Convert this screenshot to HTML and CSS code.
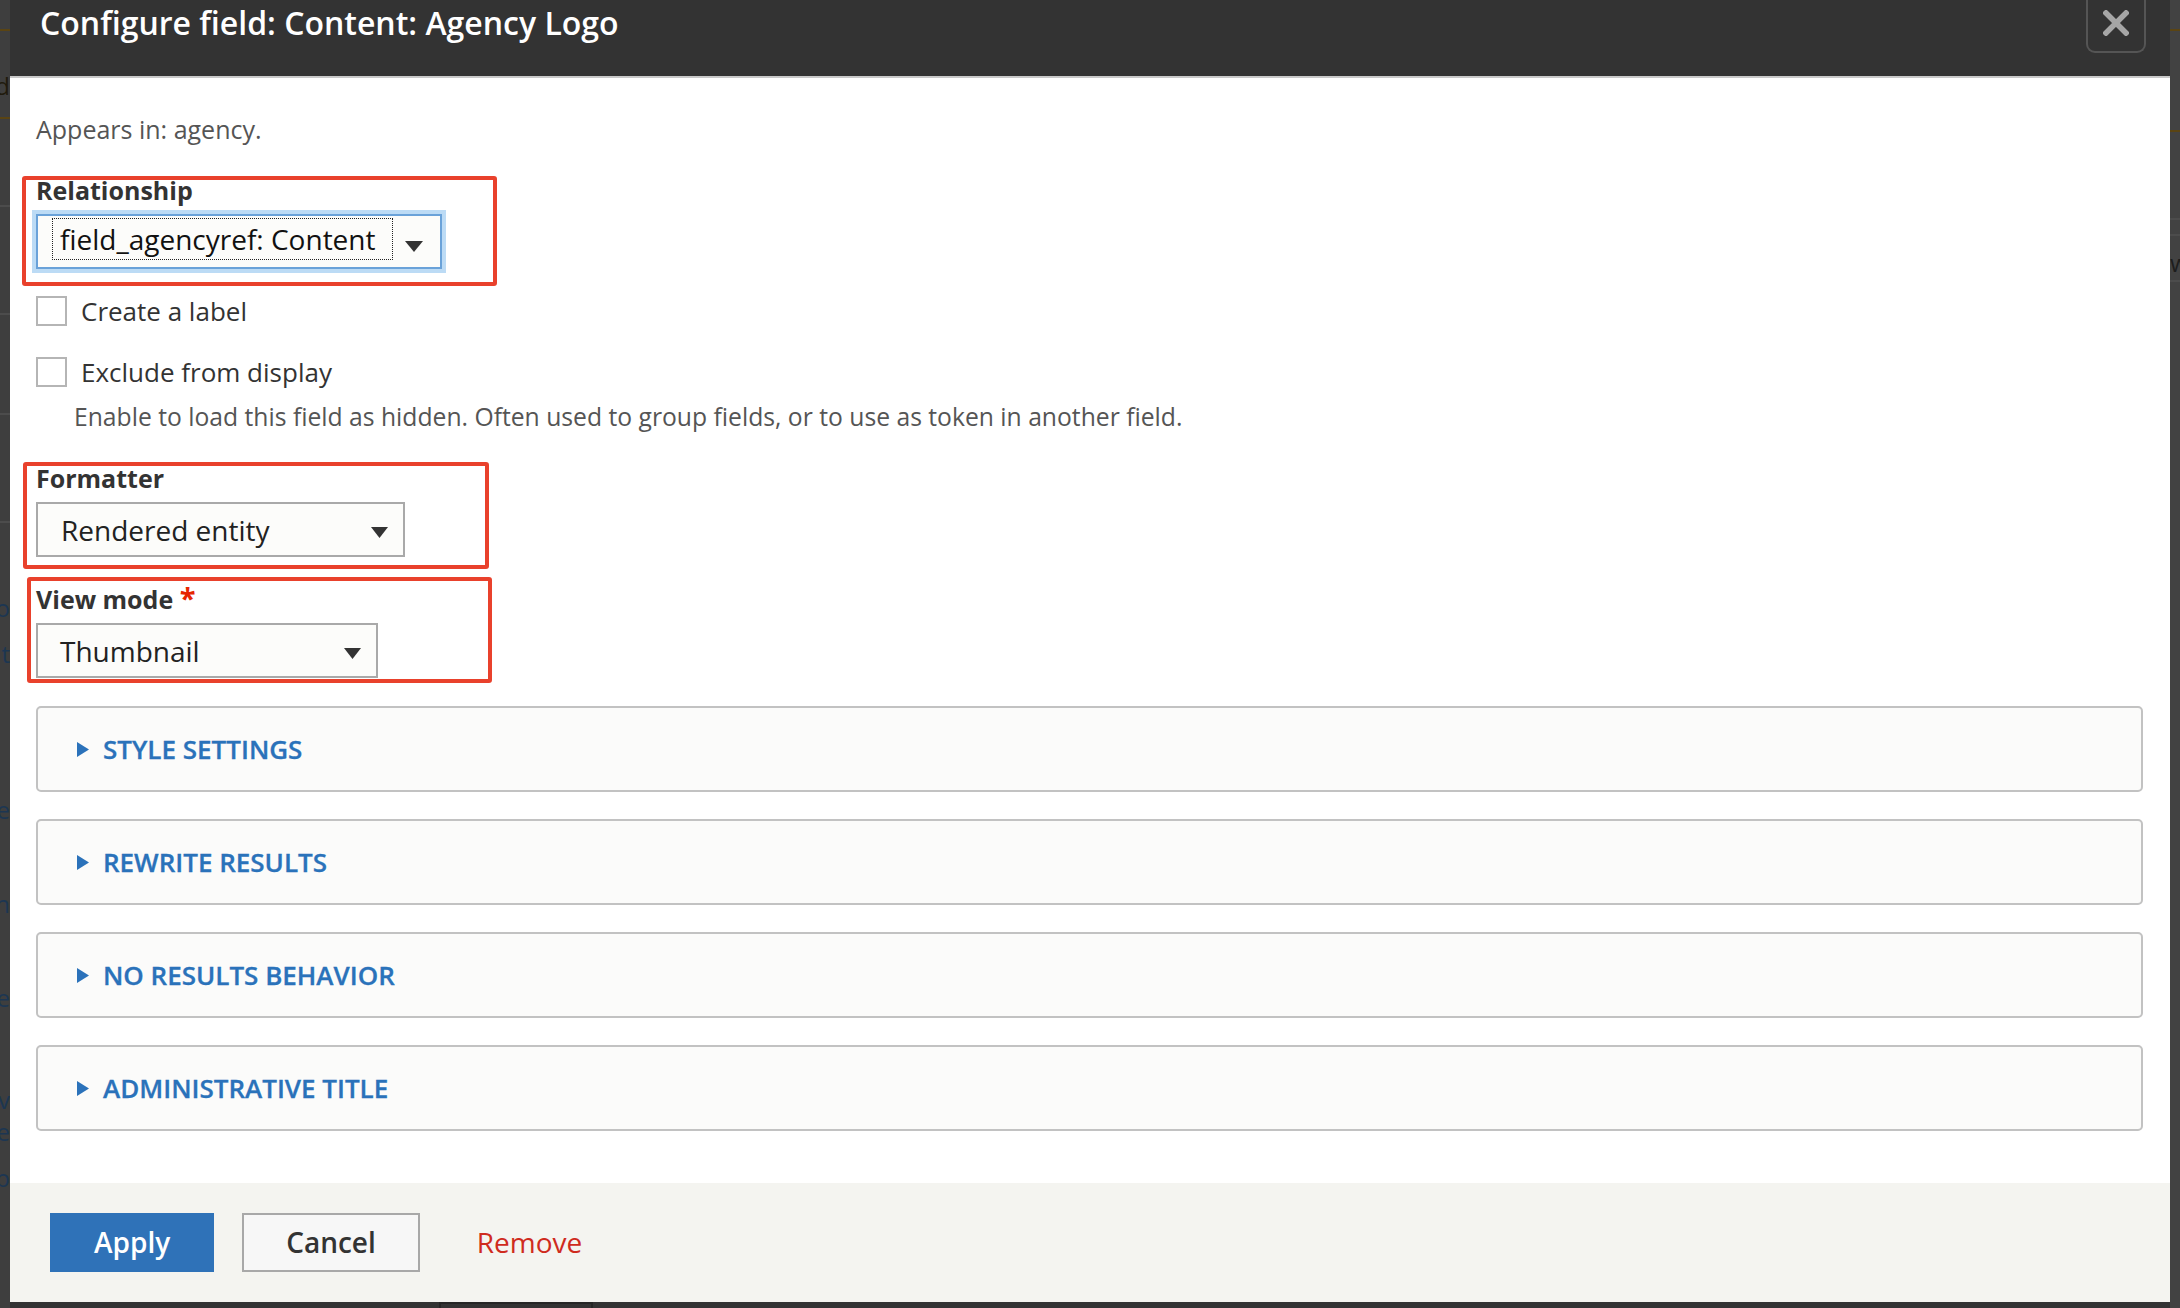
FILE: index.html
```html
<!DOCTYPE html>
<html lang="en">
<head>
<meta charset="utf-8">
<title>Configure field: Content: Agency Logo</title>
<link rel="stylesheet" href="styles.css">
</head>
<body>
<div class="screen">
  <aside class="backdrop backdrop-left">
    <div class="bd-rule bd-brown bd-m29"></div>
    <div class="bd-text bd-dark bd-m40"><span>d</span></div>
    <div class="bd-rule bd-brown bd-m16"></div>
    <div class="bd-rule bd-grey bd-m86"></div>
    <div class="bd-rule bd-grey bd-m106"></div>
    <div class="bd-rule bd-grey bd-m98"></div>
    <div class="bd-rule bd-grey bd-m106"></div>
    <div class="bd-text bd-blue bd-m70"><span>o</span></div>
    <div class="bd-text bd-blue bd-m16"><span>t</span></div>
    <div class="bd-text bd-blue bd-m126"><span>e</span></div>
    <div class="bd-text bd-blue bd-m64"><span>n</span></div>
    <div class="bd-text bd-blue bd-m64"><span>e</span></div>
    <div class="bd-text bd-blue bd-m72"><span>v</span></div>
    <div class="bd-text bd-blue bd-m2"><span>e</span></div>
    <div class="bd-text bd-blue bd-m16"><span>p</span></div>
  </aside>

  <div class="dialog-col">
    <section class="dialog">
      <header class="titlebar">
        <h1 class="title">Configure field: Content: Agency Logo</h1>
        <button class="close" type="button" aria-label="Close">
          <svg width="26" height="26" viewBox="0 0 26 26" aria-hidden="true">
            <path d="M3 3 L23 23 M23 3 L3 23" stroke="#a6a6a6" stroke-width="5.5" stroke-linecap="square" fill="none"/>
          </svg>
        </button>
      </header>

      <div class="content">
        <p class="appears">Appears in: agency.</p>

        <div class="field field-rel">
          <span class="label">Relationship</span>
          <div class="select select-focus">
            <span class="focus-value">field_agencyref: Content</span>
            <svg class="arrow arrow-rel" width="18" height="11" viewBox="0 0 18 11" aria-hidden="true"><path d="M0 0 H18 L9 11 Z" fill="#333"/></svg>
          </div>
          <span class="annot annot-rel"></span>
        </div>

        <label class="check check-first"><span class="box"></span><span>Create a label</span></label>
        <label class="check check-second"><span class="box"></span><span>Exclude from display</span></label>
        <p class="desc">Enable to load this field as hidden. Often used to group fields, or to use as token in another field.</p>

        <div class="field field-fmt">
          <span class="label">Formatter</span>
          <div class="select select-fmt">
            <span class="value">Rendered entity</span>
            <svg class="arrow" width="17" height="11" viewBox="0 0 17 11" aria-hidden="true"><path d="M0 0 H17 L8.5 11 Z" fill="#333"/></svg>
          </div>
          <span class="annot annot-fmt"></span>
        </div>

        <div class="field field-vm">
          <span class="label">View mode <span class="req">*</span></span>
          <div class="select select-vm">
            <span class="value">Thumbnail</span>
            <svg class="arrow" width="17" height="11" viewBox="0 0 17 11" aria-hidden="true"><path d="M0 0 H17 L8.5 11 Z" fill="#333"/></svg>
          </div>
          <span class="annot annot-vm"></span>
        </div>

        <div class="details details-first"><svg class="tri" width="12" height="15" viewBox="0 0 12 15" aria-hidden="true"><path d="M0 0 L12 7.5 L0 15 Z" fill="#2b72ba"/></svg><span class="summary">Style settings</span></div>
        <div class="details"><svg class="tri" width="12" height="15" viewBox="0 0 12 15" aria-hidden="true"><path d="M0 0 L12 7.5 L0 15 Z" fill="#2b72ba"/></svg><span class="summary">Rewrite results</span></div>
        <div class="details"><svg class="tri" width="12" height="15" viewBox="0 0 12 15" aria-hidden="true"><path d="M0 0 L12 7.5 L0 15 Z" fill="#2b72ba"/></svg><span class="summary">No results behavior</span></div>
        <div class="details"><svg class="tri" width="12" height="15" viewBox="0 0 12 15" aria-hidden="true"><path d="M0 0 L12 7.5 L0 15 Z" fill="#2b72ba"/></svg><span class="summary">Administrative title</span></div>
      </div>

      <footer class="footer">
        <button class="btn btn-primary" type="button">Apply</button>
        <button class="btn btn-secondary" type="button">Cancel</button>
        <a class="remove" href="#">Remove</a>
      </footer>
    </section>
    <div class="under">
      <span class="under-btn"></span>
    </div>
  </div>

  <aside class="backdrop backdrop-right">
    <div class="bd-rule bd-brown bd-m29"></div>
    <div class="bd-rule bd-brown bd-m99"></div>
    <div class="bd-rule bd-grey bd-m86"></div>
    <div class="bd-rule bd-grey bd-m14"></div>
    <div class="bd-text bd-black bd-m12"><span>w</span></div>
    <div class="bd-rule bd-grey bd-m2"></div>
  </aside>
</div>
</body>
</html>
```

FILE: styles.css
```css
* {
  box-sizing: border-box;
}

html,
body {
  margin: 0;
  padding: 0;
}

body {
  width: 2180px;
  height: 1308px;
  overflow: hidden;
  background: #363636;
  font-family: "Open Sans", "Noto Sans", sans-serif;
}

.screen {
  display: flex;
  height: 1308px;
}

/* ---------- darkened page behind the modal ---------- */
.backdrop {
  flex: none;
  width: 10px;
  overflow: hidden;
  display: flex;
  flex-direction: column;
  background: #3e3e3e;
}

.backdrop-right {
  background: #424242;
}

.bd-rule {
  height: 2px;
  flex: none;
}

.bd-brown {
  background: #5a4413;
}

.bd-grey {
  background: #4c4c4c;
}

.bd-text {
  display: flex;
  justify-content: flex-end;
  height: 30px;
  flex: none;
  font-size: 24px;
  line-height: 30px;
  white-space: nowrap;
}

.backdrop-right .bd-text {
  justify-content: flex-start;
}

.bd-dark {
  color: #201a0c;
}

.bd-blue {
  color: #1c3652;
}

.bd-black {
  color: #1d1d1d;
}

.bd-m2 { margin-top: 2px; }
.bd-m12 { margin-top: 12px; }
.bd-m14 { margin-top: 14px; }
.bd-m16 { margin-top: 16px; }
.bd-m29 { margin-top: 29px; }
.bd-m40 { margin-top: 40px; }
.bd-m64 { margin-top: 64px; }
.bd-m70 { margin-top: 70px; }
.bd-m72 { margin-top: 72px; }
.bd-m86 { margin-top: 86px; }
.bd-m98 { margin-top: 98px; }
.bd-m99 { margin-top: 99px; }
.bd-m106 { margin-top: 106px; }
.bd-m126 { margin-top: 126px; }

/* ---------- modal ---------- */
.dialog-col {
  flex: none;
  width: 2160px;
  display: flex;
  flex-direction: column;
}

.dialog {
  height: 1302px;
  display: flex;
  flex-direction: column;
  background: #fff;
}

.under {
  flex: 1;
  background: #333;
  padding-left: 429px;
}

.under-btn {
  display: block;
  width: 154px;
  height: 6px;
  border: 2px solid #262626;
  border-bottom: none;
}

.titlebar {
  flex: none;
  height: 78px;
  background: #333;
  border-bottom: 2px solid #c9c9c9;
  display: flex;
  justify-content: space-between;
  align-items: flex-start;
}

.title {
  margin: 0;
  padding: 4px 0 0 30px;
  font-size: 32px;
  font-weight: 600;
  line-height: 38px;
  color: #fff;
}

.close {
  width: 60px;
  height: 53px;
  margin-right: 24px;
  padding: 0 0 5px;
  border: 2px solid #555;
  border-top: none;
  border-radius: 0 0 9px 9px;
  background: #333;
  display: flex;
  align-items: center;
  justify-content: center;
}

.content {
  flex: 1;
  padding: 35px 27px 0 26px;
}

.appears {
  margin: 0;
  font-size: 25px;
  line-height: 32px;
  color: #555;
}

.field {
  position: relative;
}

.field-rel {
  margin-top: 29px;
}

.field-fmt {
  margin-top: 30px;
}

.field-vm {
  margin-top: 26px;
}

.label {
  display: block;
  font-size: 25px;
  font-weight: 700;
  line-height: 32px;
  color: #333;
}

.req {
  font-size: 29px;
  line-height: 20px;
  color: #e62600;
}

.select {
  margin-top: 8px;
  height: 55px;
  display: flex;
  align-items: center;
  border: 2px solid #a9a9a9;
  background: #fcfcfa;
  font-size: 28px;
  color: #222;
}

.select .value {
  flex: 1;
}

.select .arrow {
  margin-top: 6px;
  flex: none;
}

.select-focus {
  width: 406px;
  align-items: flex-start;
  padding: 2px 17px 0 14px;
  border-color: #6aa2d9;
  box-shadow: 0 0 0 4px #bcdbf5;
}

.focus-value {
  width: 343px;
  height: 42px;
  padding-left: 7px;
  line-height: 40px;
  border: 1px dotted #222;
  color: #111;
}

.arrow-rel {
  margin-left: 12px;
  margin-top: 23px !important;
}

.select-fmt {
  width: 369px;
  padding: 0 15px 0 23px;
}

.select-vm {
  width: 342px;
  padding: 0 15px 0 22px;
}

.annot {
  position: absolute;
  border: 4px solid #e9412c;
  border-radius: 3px;
  pointer-events: none;
}

.annot-rel {
  left: -14px;
  top: 2px;
  width: 475px;
  height: 110px;
}

.annot-fmt {
  left: -13px;
  top: 0;
  width: 466px;
  height: 107px;
}

.annot-vm {
  left: -9px;
  top: -6px;
  width: 465px;
  height: 106px;
}

.check {
  display: flex;
  align-items: center;
  gap: 14px;
  height: 30px;
  font-size: 26px;
  line-height: 30px;
  color: #333;
}

.check-first {
  margin-top: 27px;
}

.check-second {
  margin-top: 31px;
}

.box {
  flex: none;
  width: 31px;
  height: 30px;
  border: 2px solid #b5b5b5;
  background: #fff;
}

.desc {
  margin: 15px 0 0 38px;
  font-size: 24.7px;
  line-height: 30px;
  color: #555;
}

.details {
  margin-top: 27px;
  height: 86px;
  display: flex;
  align-items: center;
  gap: 14px;
  padding-left: 39px;
  border: 2px solid #c2c2c2;
  border-radius: 5px;
  background: #fbfbfa;
}

.details-first {
  margin-top: 28px;
}

.tri {
  flex: none;
}

.summary {
  font-size: 26px;
  font-weight: 600;
  text-transform: uppercase;
  color: #2a72ba;
  -webkit-text-stroke: 0.3px #2a72ba;
}

.footer {
  flex: none;
  height: 119px;
  display: flex;
  align-items: flex-start;
  gap: 28px;
  padding: 30px 40px 0;
  background: #f4f4f0;
}

.btn {
  height: 59px;
  padding: 0 44px;
  font-family: "Open Sans", "Noto Sans", sans-serif;
  font-size: 28px;
  font-weight: 600;
  line-height: 55px;
}

.btn-primary {
  border: none;
  background: #2f72b8;
  color: #fff;
}

.btn-secondary {
  padding: 0 42px;
  border: 2px solid #a8a8a8;
  background: #f7f7f7;
  color: #333;
}

.remove {
  margin-left: 29px;
  font-size: 28px;
  line-height: 59px;
  color: #cf2b1e;
  text-decoration: none;
}
```
